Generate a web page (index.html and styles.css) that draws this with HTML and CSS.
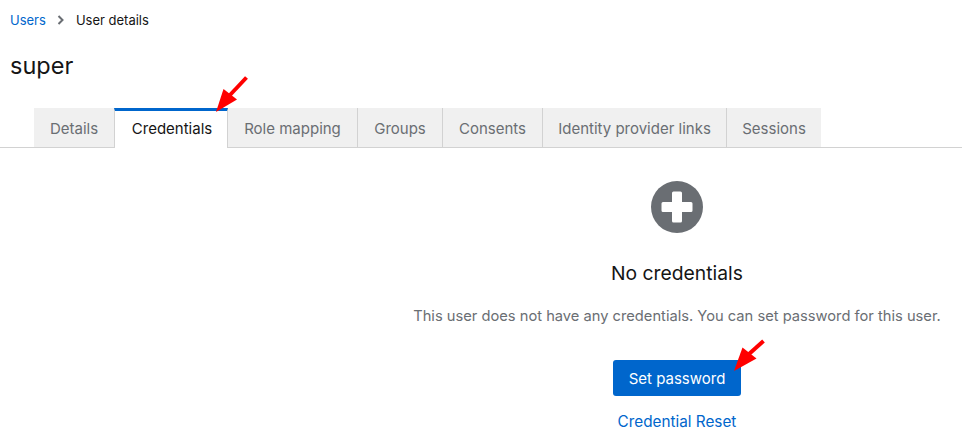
FILE: index.html
```html
<!DOCTYPE html>
<html lang="en">
<head>
<meta charset="utf-8">
<title>User details</title>
<link rel="stylesheet" href="styles.css">
</head>
<body>
<nav class="crumbs">
  <a class="link" href="#">Users</a>
  <svg class="chev" viewBox="0 0 8 12" width="8" height="12"><path d="M1.500 2 5.500 6l-4 4" fill="none" stroke="#6a6e73" stroke-width="2"/></svg>
  <span>User details</span>
</nav>
<h1 class="title">super</h1>
<div class="tabs">
  <div class="tab">Details</div>
  <div class="tab active">Credentials
    <svg class="arrow arrow-tab" viewBox="0 0 36 40" width="36" height="40"><path d="M32.500 2.500 16 20" stroke="#f00" stroke-width="4" fill="none"/><path d="M2 37 9.500 14 23 24.500Z" fill="#f00"/></svg>
  </div>
  <div class="tab">Role mapping</div>
  <div class="tab">Groups</div>
  <div class="tab">Consents</div>
  <div class="tab">Identity provider links</div>
  <div class="tab">Sessions</div>
</div>
<main class="empty">
  <svg class="plus" viewBox="0 0 52 52" width="52" height="52"><circle cx="26" cy="26" r="26" fill="#6a6e73"/><path d="M22.500 10.500h7a1.500 1.500 0 0 1 1.500 1.500v9h9a1.500 1.500 0 0 1 1.500 1.500v7a1.500 1.500 0 0 1-1.500 1.500h-9v9a1.500 1.500 0 0 1-1.500 1.500h-7a1.500 1.500 0 0 1-1.500-1.500v-9h-9a1.500 1.500 0 0 1-1.500-1.500v-7a1.500 1.500 0 0 1 1.500-1.500h9v-9a1.500 1.500 0 0 1 1.500-1.500z" fill="#fff"/></svg>
  <h2 class="empty-title">No credentials</h2>
  <p class="empty-body">This user does not have any credentials. You can set password for this user.</p>
  <div class="btn">Set password
    <svg class="arrow arrow-btn" viewBox="0 0 34 36" width="34" height="36"><path d="M30.500 2 16 15" stroke="#f00" stroke-width="4" fill="none"/><path d="M1 32 9.500 8.500 23.500 19.500Z" fill="#f00"/></svg>
  </div>
  <a class="link reset" href="#">Credential Reset</a>
</main>
</body>
</html>
```
FILE: styles.css
```css
* { box-sizing: border-box; }
html, body { margin: 0; padding: 0; }
body {
  width: 962px;
  height: 443px;
  overflow: hidden;
  background: #fff;
  color: #151515;
  font-family: Inter, "Open Sans", "Liberation Sans", sans-serif;
  font-size: 14px;
}
.link { color: #06c; text-decoration: none; }
.crumbs {
  display: flex;
  align-items: center;
  height: 20px;
  margin: 10px 0 0 10px;
  font-size: 13px;
}
.chev { margin: 0 11px 0 11px; }
.title {
  margin: 22px 0 0 10px;
  font-size: 23.500px;
  line-height: 28px;
  font-weight: 400;
}
.tabs {
  display: flex;
  height: 40px;
  margin-top: 28px;
  padding-left: 34px;
  border-bottom: 1px solid #d2d2d2;
}
.tab {
  position: relative;
  display: flex;
  align-items: center;
  justify-content: center;
  height: 40px;
  padding: 1px 16px 0;
  background: #f0f0f0;
  border-right: 1px solid #d2d2d2;
  border-bottom: 1px solid #d2d2d2;
  color: #6a6e73;
  font-size: 15px;
  white-space: nowrap;
}
.tab:nth-child(1) { width: 80px; border-right: 0; }
.tab:nth-child(2) { width: 114px; }
.tab:nth-child(3) { width: 130px; }
.tab:nth-child(4) { width: 85px; }
.tab:nth-child(5) { width: 100px; }
.tab:nth-child(6) { width: 184px; }
.tab:nth-child(7) { width: 94px; border-right: 0; }
.tab.active {
  background: #fff;
  color: #151515;
  border-top: 3px solid #06c;
  border-left: 1px solid #d2d2d2;
  border-bottom: 0;
  padding: 0 15px 2px 17px;
}
.arrow { position: absolute; }
.arrow-tab { left: 99px; top: -36px; }
.arrow-btn { left: 120px; top: -21px; }
.empty {
  display: flex;
  flex-direction: column;
  align-items: center;
  margin-left: 392px;
  padding-top: 33px;
}
.plus { display: block; }
.empty-title {
  margin: 28px 0 0;
  font-size: 19.300px;
  line-height: 24px;
  font-weight: 400;
}
.empty-body {
  margin: 19px 0 0;
  color: #6a6e73;
  font-size: 14.700px;
  line-height: 24px;
  white-space: nowrap;
}
.btn {
  position: relative;
  display: flex;
  align-items: center;
  justify-content: center;
  width: 128px;
  height: 36px;
  margin-top: 32px;
  background: #06c;
  border-radius: 3px;
  color: #fff;
  font-size: 15px;
}
.reset {
  margin-top: 14px;
  font-size: 15.300px;
  line-height: 24px;
}
```
